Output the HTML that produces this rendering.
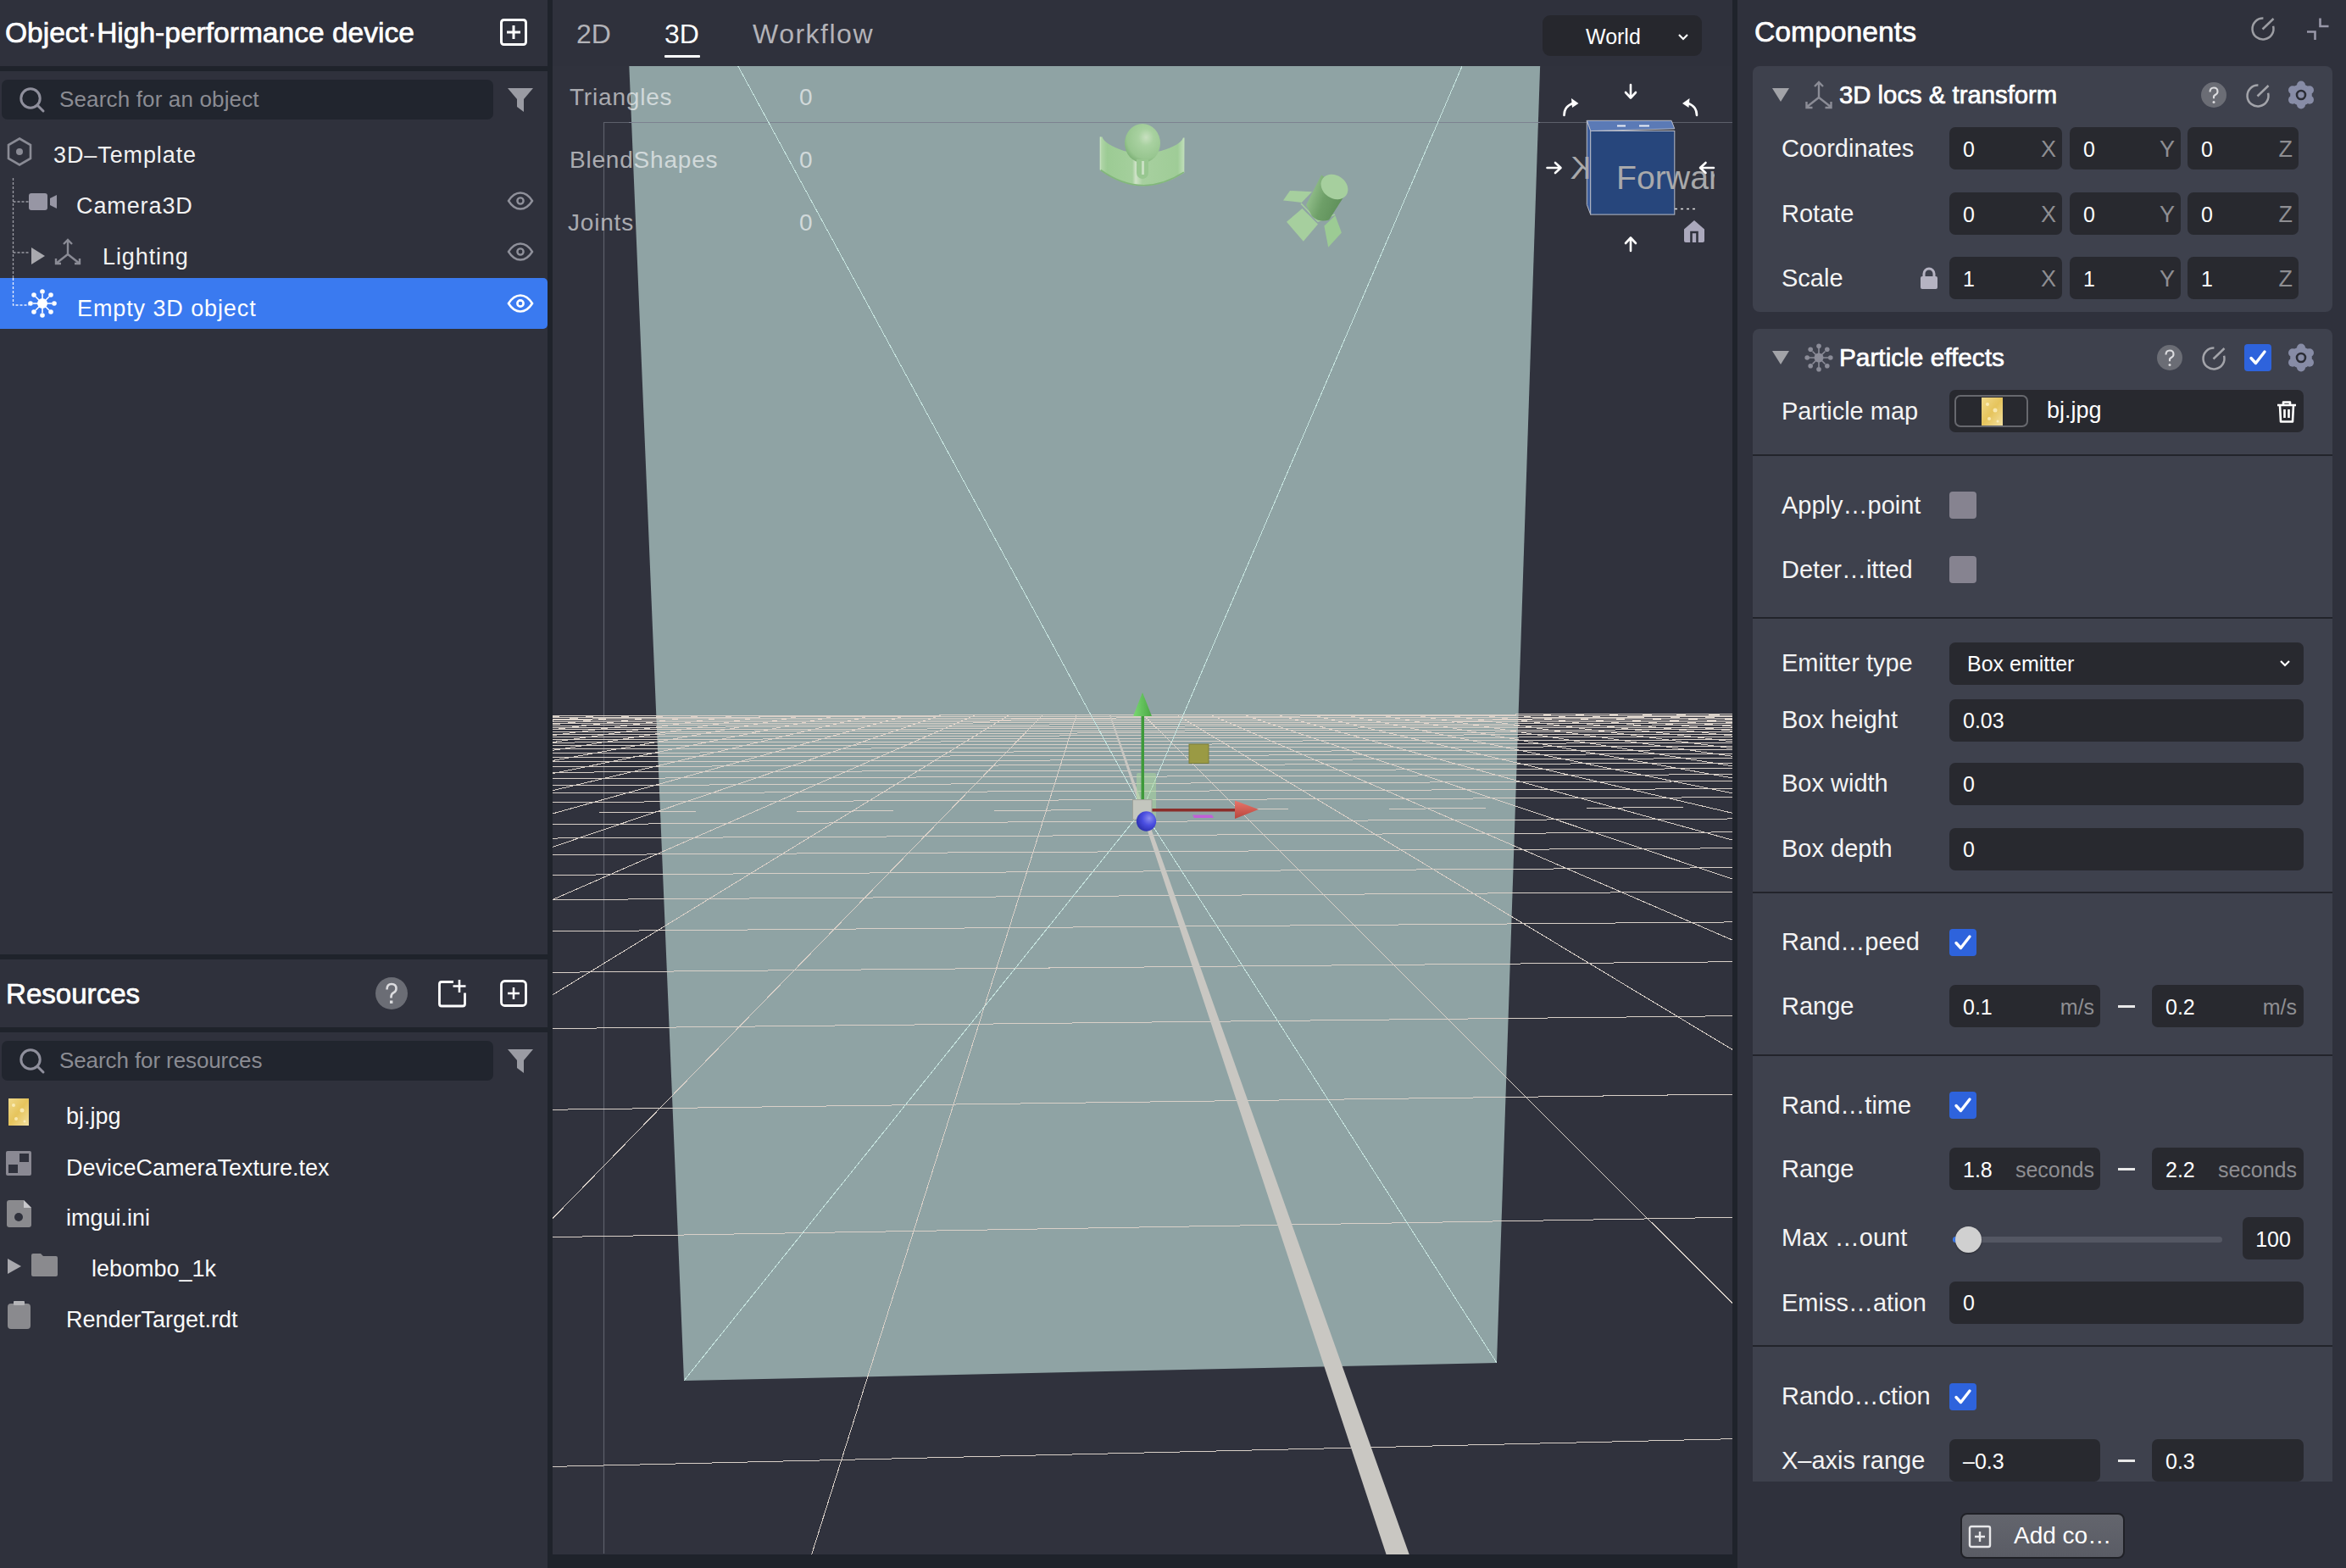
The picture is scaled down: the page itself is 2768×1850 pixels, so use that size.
<!DOCTYPE html>
<html><head><meta charset="utf-8">
<style>
*{margin:0;padding:0;box-sizing:border-box}
html,body{width:2768px;height:1850px;overflow:hidden;background:#2f313c;font-family:"Liberation Sans",sans-serif;color:#fff}
.a{position:absolute}
.t{position:absolute;white-space:nowrap;line-height:1}
.div{position:absolute;background:#1f232b}
.search{position:absolute;background:#21252e;border-radius:7px}
.ph{color:#8b8c93;font-size:26px;letter-spacing:0.6px}
.tree{font-size:27px;color:#f2f2f2;letter-spacing:0.9px}
.res{font-size:27px;color:#fafafa}
.h1{font-size:33px;font-weight:bold;color:#fff}
.tab{font-size:32px;color:#b3b3b8}
.stat{font-size:28px;color:rgba(255,255,255,0.6);letter-spacing:0.8px}
.card{position:absolute;left:2068px;width:684px;background:#3e414d;border-radius:8px}
.lbl{font-size:28px;color:#f4f4f4}
.inp{position:absolute;background:#28292f;border-radius:7px}
.val{font-size:25px;color:#fff}
.ax{font-size:26px;color:#8e8e92}
.unit{font-size:25px;color:#8e8e92}
.sep{position:absolute;left:2068px;width:684px;height:3px;background:#25272e}
.cb{position:absolute;width:32px;height:32px;border-radius:4px;background:#2e63dc}
.hb{font-weight:bold;color:#fff}
.sb{font-weight:normal;color:#fff;-webkit-text-stroke:0.7px #fff}
.cbg{position:absolute;width:32px;height:32px;border-radius:4px;background:#868390}
</style></head>
<body>
<!-- ============ LEFT PANEL ============ -->
<div class="t sb" style="left:6px;top:21.5px;font-size:33.56px">Object·High-performance device</div>
<svg class="a" style="left:588px;top:20px" width="36" height="36" viewBox="0 0 36 36"><rect x="3.5" y="3.5" width="29" height="29" rx="3" fill="none" stroke="#fff" stroke-width="3"/><path d="M18 10v16M10 18h16" stroke="#fff" stroke-width="3"/></svg>
<div class="div" style="left:0;top:78px;width:646px;height:6px"></div>
<div class="search" style="left:2px;top:94px;width:580px;height:47px"></div>
<svg class="a" style="left:22px;top:103px" width="32" height="32" viewBox="0 0 32 32"><circle cx="14" cy="13" r="11.2" fill="none" stroke="#8f8f9c" stroke-width="3"/><path d="M22.5 21.5l6.5 6.5" stroke="#8f8f9c" stroke-width="3" stroke-linecap="round"/></svg>
<div class="t ph" style="left:70px;top:104px;letter-spacing:0.15px">Search for an object</div>
<svg class="a" style="left:598px;top:103px" width="32" height="30" viewBox="0 0 32 30"><path d="M1 1h30l-11 13v15l-8-6v-9z" fill="#9a9ba3"/></svg>

<!-- tree -->
<svg class="a" style="left:6px;top:161px" width="34" height="36" viewBox="0 0 34 36"><path d="M17 2.5L30 10v16L17 33.5 4 26V10z" fill="none" stroke="#8a8b95" stroke-width="2.6"/><circle cx="17" cy="18" r="4" fill="#8a8b95"/></svg>
<div class="t tree" style="left:63px;top:170px">3D–Template</div>
<svg class="a" style="left:12px;top:208px" width="30" height="170" viewBox="0 0 30 170"><path d="M3.5 2V152M3.5 30H22M3.5 90H22M3.5 151H22" stroke="#9a9ba3" stroke-width="1.3" stroke-dasharray="3 2" fill="none"/></svg>
<svg class="a" style="left:34px;top:227px" width="34" height="22" viewBox="0 0 34 22"><rect x="0" y="1" width="22" height="20" rx="3" fill="#9796a4"/><path d="M25 7l8-4v16l-8-4z" fill="#9796a4"/></svg>
<div class="t tree" style="left:90px;top:230px">Camera3D</div>
<svg class="a" style="left:598px;top:226px" width="32" height="22" viewBox="0 0 32 22"><path d="M2 11C7 3 12 1.5 16 1.5S25 3 30 11C25 19 20 20.5 16 20.5S7 19 2 11z" fill="none" stroke="#8f909a" stroke-width="2.4"/><circle cx="16" cy="11" r="3.6" fill="none" stroke="#8f909a" stroke-width="2.4"/></svg>
<svg class="a" style="left:36px;top:291px" width="18" height="22" viewBox="0 0 18 22"><path d="M1 1l16 10L1 21z" fill="#a9a9ae"/></svg>
<svg class="a" style="left:63px;top:281px" width="34" height="34" viewBox="0 0 34 34"><path d="M17 2v17M17 19L3 30M17 19l14 11M12 7l5-5 5 5M3 24v6h6M25 30h6v-6" fill="none" stroke="#8a8b95" stroke-width="2.4"/></svg>
<div class="t tree" style="left:121px;top:290px">Lighting</div>
<svg class="a" style="left:598px;top:286px" width="32" height="22" viewBox="0 0 32 22"><path d="M2 11C7 3 12 1.5 16 1.5S25 3 30 11C25 19 20 20.5 16 20.5S7 19 2 11z" fill="none" stroke="#8f909a" stroke-width="2.4"/><circle cx="16" cy="11" r="3.6" fill="none" stroke="#8f909a" stroke-width="2.4"/></svg>
<div class="a" style="left:0;top:328px;width:646px;height:60px;background:#3a7af0;border-radius:0 5px 5px 0"></div>
<svg class="a" style="left:12px;top:208px" width="30" height="170" viewBox="0 0 30 170"><path d="M3.5 120V152H22" stroke="#e8eefc" stroke-width="1.3" stroke-dasharray="3 2" fill="none"/></svg>
<svg class="a" style="left:33px;top:341px" width="34" height="34" viewBox="0 0 34 34"><g fill="#fff"><circle cx="17" cy="17" r="6"/><circle cx="17" cy="3" r="2.8"/><circle cx="17" cy="31" r="2.8"/><circle cx="3" cy="17" r="2.8"/><circle cx="31" cy="17" r="2.8"/><circle cx="7" cy="7" r="2.8"/><circle cx="27" cy="7" r="2.8"/><circle cx="7" cy="27" r="2.8"/><circle cx="27" cy="27" r="2.8"/></g><path d="M17 6v22M6 17h22M9 9l16 16M25 9L9 25" stroke="#fff" stroke-width="1.6"/></svg>
<div class="t tree" style="left:91px;top:351px;color:#fff">Empty 3D object</div>
<svg class="a" style="left:598px;top:347px" width="32" height="22" viewBox="0 0 32 22"><path d="M2 11C7 3 12 1.5 16 1.5S25 3 30 11C25 19 20 20.5 16 20.5S7 19 2 11z" fill="none" stroke="#fff" stroke-width="2.6"/><circle cx="16" cy="11" r="3.6" fill="none" stroke="#fff" stroke-width="2.6"/></svg>

<!-- resources -->
<div class="div" style="left:0;top:1126px;width:646px;height:6px"></div>
<div class="t sb" style="left:7px;top:1156px;font-size:33.1px">Resources</div>
<svg class="a" style="left:442px;top:1152px" width="40" height="40" viewBox="0 0 40 40"><circle cx="20" cy="20" r="19" fill="#6b6d75"/><path d="M14.5 15.5q0-6.5 5.5-6.5t5.5 5.5q0 3-3 4.6T19.5 24v1.6" fill="none" stroke="#dcdcdf" stroke-width="2.6"/><rect x="18" y="28.5" width="3.4" height="3.4" fill="#dcdcdf"/></svg>
<svg class="a" style="left:515px;top:1155px" width="38" height="36" viewBox="0 0 38 36"><path d="M20 3.5H6Q3.5 3.5 3.5 6v23.5Q3.5 32 6 32h25q2.5 0 2.5-2.5V16.5" fill="none" stroke="#fff" stroke-width="2.8"/><path d="M27 1v15M19.5 8.5h15" stroke="#fff" stroke-width="2.6"/></svg>
<svg class="a" style="left:588px;top:1154px" width="36" height="36" viewBox="0 0 36 36"><rect x="3.5" y="3.5" width="29" height="29" rx="4" fill="none" stroke="#fff" stroke-width="2.8"/><path d="M18 11v14M11 18h14" stroke="#fff" stroke-width="2.5"/></svg>
<div class="div" style="left:0;top:1212px;width:646px;height:6px"></div>
<div class="search" style="left:2px;top:1228px;width:580px;height:47px"></div>
<svg class="a" style="left:22px;top:1237px" width="32" height="32" viewBox="0 0 32 32"><circle cx="14" cy="13" r="11.2" fill="none" stroke="#8f8f9c" stroke-width="3"/><path d="M22.5 21.5l6.5 6.5" stroke="#8f8f9c" stroke-width="3" stroke-linecap="round"/></svg>
<div class="t ph" style="left:70px;top:1238px;letter-spacing:-0.1px">Search for resources</div>
<svg class="a" style="left:598px;top:1237px" width="32" height="30" viewBox="0 0 32 30"><path d="M1 1h30l-11 13v15l-8-6v-9z" fill="#9a9ba3"/></svg>

<svg class="a" style="left:10px;top:1296px" width="24" height="32" viewBox="0 0 24 32"><defs><linearGradient id="gy" x1="0" y1="0" x2="1" y2="1"><stop offset="0" stop-color="#f0d98a"/><stop offset="0.5" stop-color="#e6c45c"/><stop offset="1" stop-color="#f3e0a0"/></linearGradient></defs><rect width="24" height="32" fill="url(#gy)"/><g fill="#fff6d0" opacity="0.7"><circle cx="6" cy="8" r="2"/><circle cx="16" cy="14" r="2.5"/><circle cx="9" cy="24" r="2"/><circle cx="19" cy="27" r="1.5"/></g></svg>
<div class="t res" style="left:78px;top:1304px">bj.jpg</div>
<svg class="a" style="left:7px;top:1358px" width="30" height="29" viewBox="0 0 30 29"><rect x="0" y="0" width="30" height="29" rx="2" fill="#8a8993"/><rect x="16" y="3" width="11" height="10" fill="#2f313c"/><rect x="3" y="16" width="11" height="10" fill="#2f313c"/></svg>
<div class="t res" style="left:78px;top:1365px">DeviceCameraTexture.tex</div>
<svg class="a" style="left:8px;top:1416px" width="29" height="32" viewBox="0 0 29 32"><path d="M3 0h17l9 9v20q0 3-3 3H3q-3 0-3-3V3q0-3 3-3z" fill="#8a8a8e"/><path d="M20 0v9h9" fill="#c8c8cc"/><circle cx="14" cy="20" r="5" fill="#2f313c"/></svg>
<div class="t res" style="left:78px;top:1424px">imgui.ini</div>
<svg class="a" style="left:9px;top:1485px" width="16" height="18" viewBox="0 0 16 18"><path d="M0 0l16 9L0 18z" fill="#a9a9ae"/></svg>
<svg class="a" style="left:37px;top:1479px" width="31" height="27" viewBox="0 0 31 27"><path d="M0 2q0-2 2-2h9l3 3h15q2 0 2 2v20q0 2-2 2H2q-2 0-2-2z" fill="#8a8a8e"/></svg>
<div class="t res" style="left:108px;top:1484px">lebombo_1k</div>
<svg class="a" style="left:9px;top:1535px" width="27" height="33" viewBox="0 0 27 33"><rect x="0" y="3" width="27" height="30" rx="4" fill="#8a8a8e"/><rect x="7" y="0" width="13" height="5" rx="1" fill="#b5b5b8"/></svg>
<div class="t res" style="left:78px;top:1544px">RenderTarget.rdt</div>

<div class="div" style="left:646px;top:0;width:6px;height:1850px"></div>

<!-- ============ VIEWPORT ============ -->
<div class="a" style="left:652px;top:78px;width:1392px;height:1756px;overflow:hidden;background:#30323d">
<svg class="a" style="left:-652px;top:-78px" width="2768" height="1850" viewBox="0 0 2768 1850">
<path d="M713 144.5H2044M712.5 144V1833" stroke="#5d606b" stroke-width="1.2" fill="none"/>
<path d="M742 70L1817.4 70L1766 1608L807 1629Z" fill="#8fa3a4"/>
<path d="M742 144.5H1817" stroke="#7c8290" stroke-width="1.2" fill="none"/>
<path d="M640.0 847.0L663.3 844.7M640.0 851.4L704.3 844.6M640.0 856.4L745.2 844.6M640.0 862.3L786.1 844.5M640.0 869.2L826.8 844.5M640.0 877.4L867.5 844.4M640.0 1730.7L2060.0 1697.3M640.0 887.3L908.1 844.3M640.0 1459.8L2060.0 1436.0M640.0 899.6L948.6 844.3M640.0 1309.4L2060.0 1290.8M640.0 915.1L989.1 844.2M640.0 1213.7L2060.0 1198.5M640.0 935.5L1029.4 844.1M640.0 1147.4L2060.0 1134.6M640.0 963.3L1069.7 844.1M640.0 1098.9L2060.0 1087.8M640.0 1003.4L1109.9 844.0M640.0 1061.7L2060.0 1051.9M640.0 1066.7L1150.0 844.0M640.0 1032.4L2060.0 1023.6M640.0 1181.1L1190.1 843.9M640.0 1008.7L2060.0 1000.7M640.0 1450.0L1230.0 843.8M640.0 989.1L2060.0 981.8M952.6 1850.0L1269.9 843.8M640.0 972.6L2060.0 965.9M2060.0 1553.6L1349.4 843.7M640.0 946.5L2060.0 940.7M2060.0 1248.0L1389.0 843.6M640.0 936.0L2060.0 930.6M2060.0 1116.0L1428.6 843.5M640.0 926.7L2060.0 921.7M2060.0 1042.4L1468.1 843.5M640.0 918.5L2060.0 913.7M2060.0 995.5L1507.5 843.4M640.0 911.2L2060.0 906.7M2060.0 963.0L1546.8 843.4M640.0 904.6L2060.0 900.4M2060.0 939.1L1586.0 843.3M640.0 898.7L2060.0 894.7M2060.0 920.8L1625.2 843.2M640.0 893.3L2060.0 889.5M2060.0 906.3L1664.3 843.2M640.0 888.5L2060.0 884.7M2060.0 894.6L1703.3 843.1M640.0 884.0L2060.0 880.4M2060.0 885.0L1742.2 843.1M640.0 879.9L2060.0 876.5M2060.0 876.9L1781.1 843.0M640.0 876.1L2060.0 872.8M2060.0 869.9L1819.8 842.9M640.0 872.6L2060.0 869.4M2060.0 864.0L1858.5 842.9M640.0 869.3L2060.0 866.3M2060.0 858.8L1897.2 842.8M640.0 866.3L2060.0 863.4M2060.0 854.2L1935.7 842.8M640.0 863.5L2060.0 860.7M2060.0 850.2L1974.2 842.7M640.0 860.9L2060.0 858.1M2060.0 846.5L2012.6 842.7M640.0 858.4L2060.0 855.8M2060.0 843.3L2050.9 842.6M640.0 856.1L2060.0 853.5M640.0 853.9L2060.0 851.4M640.0 851.9L2060.0 849.5M640.0 849.9L2060.0 847.6M640.0 848.1L2060.0 845.8M640.0 846.4L2060.0 844.2M640.0 844.7L2060.0 842.6M7.7 961.3L122.2 960.8M240.7 960.3L355.2 959.8M473.7 959.3L588.2 958.8M706.7 958.3L821.2 957.8M939.7 957.3L1054.2 956.8M1172.7 956.3L1287.2 955.8M1405.7 955.2L1520.2 954.8M1638.7 954.2L1753.2 953.7M1871.7 953.2L1986.2 952.7" stroke="#d9d0c8" stroke-width="1.0" fill="none" shape-rendering="crispEdges"/>
<path d="M1308.9 843.7L3830.7 8488.0L4029.4 8488.0L1310.5 843.7Z" fill="#c9c7c2"/>
<path d="M1348 955.5L861 60M1348 955.5L1732.8 60M1348 955.5L807 1629M1348 955.5L1766 1608" stroke="#c6e4df" stroke-width="1" fill="none" shape-rendering="crispEdges"/>
<defs>
<linearGradient id="band" x1="0" y1="0" x2="1" y2="0"><stop offset="0" stop-color="#b2d6aa"/><stop offset="0.08" stop-color="#9ccb94"/><stop offset="0.38" stop-color="#a4cf9c"/><stop offset="0.42" stop-color="#cfe2c8"/><stop offset="0.5" stop-color="#a7d09f"/><stop offset="0.92" stop-color="#9fcc97"/><stop offset="1" stop-color="#c2e0bb"/></linearGradient>
<radialGradient id="sph" cx="0.6" cy="0.35" r="0.72"><stop offset="0" stop-color="#c8e0c0"/><stop offset="0.3" stop-color="#a8d1a0"/><stop offset="0.75" stop-color="#98c690"/><stop offset="1" stop-color="#76ab6f"/></radialGradient>
<linearGradient id="cyl" x1="0" y1="0" x2="1" y2="0.4"><stop offset="0" stop-color="#a8d2a0"/><stop offset="0.55" stop-color="#6e9f68"/><stop offset="1" stop-color="#5d8e58"/></linearGradient>
<radialGradient id="blueS" cx="0.65" cy="0.35" r="0.7"><stop offset="0" stop-color="#8a8cf0"/><stop offset="0.5" stop-color="#4a4ee0"/><stop offset="1" stop-color="#2c30b0"/></radialGradient>
<linearGradient id="redC" x1="0" y1="0" x2="0" y2="1"><stop offset="0" stop-color="#e8766c"/><stop offset="1" stop-color="#b8453c"/></linearGradient>
<linearGradient id="grnC" x1="0" y1="0" x2="1" y2="0"><stop offset="0" stop-color="#7ad872"/><stop offset="1" stop-color="#4aa844"/></linearGradient>
</defs>
<!-- lamp -->
<path d="M1298.4 161.5L1300.5 161.5Q1303 170 1326 178Q1348 184 1370 178Q1393 171 1396 162.5L1397.5 162.5L1397.3 203.7Q1347 236 1298.4 201Z" fill="url(#band)"/>
<path d="M1298.6 200.5Q1347 235.5 1396.8 203.2" fill="none" stroke="#82b77b" stroke-width="1.6"/>
<path d="M1298.4 161.5V200.5" stroke="#c4e2bd" stroke-width="1.5"/>
<ellipse cx="1348" cy="169" rx="21" ry="23" fill="url(#sph)"/>
<rect x="1341" y="188" width="14" height="23" rx="7" fill="#98c790"/>
<rect x="1341" y="188" width="14" height="6" fill="#98c790"/>
<rect x="1347" y="190" width="3" height="16" fill="#c8e0c2"/>
<!-- spotlight -->
<path d="M1514 236.4L1522 225L1548 226.2L1535.8 239Z" fill="#a6cf9e"/>
<path d="M1518 261.7L1536.5 246L1555 264.4L1537.8 284.8Z" fill="#a6cf9e"/>
<path d="M1562.4 266.4L1575.4 254.2L1582.9 274.6L1567.2 291.7Z" fill="#9ccb94"/>
<path d="M1535 240L1555 261L1575 253" fill="none" stroke="#a6cf9e" stroke-width="1.6"/>
<path d="M1559 206.4L1589.7 225.5L1568 259.6Q1556 263 1548 255L1541 242Z" fill="url(#cyl)"/>
<ellipse cx="1574.5" cy="220.5" rx="17" ry="13.5" transform="rotate(35 1574.5 220.5)" fill="#a6cf9e"/>
<!-- gizmo -->
<rect x="1341" y="912" width="23" height="62" rx="2" fill="#a9d79f" opacity="0.55"/>
<rect x="1403" y="878" width="23" height="22.5" fill="#9a9a44" stroke="#80803a" stroke-width="1"/>
<path d="M1407 961.6L1430 961.6L1432 965L1409 965Z" fill="#c060d8"/>
<rect x="1346.5" y="845" width="3.5" height="100" fill="#3e9a3a"/>
<path d="M1348 817L1359 845L1337 845Z" fill="url(#grnC)"/>
<rect x="1359" y="954" width="100" height="3.5" fill="#8a2e2a"/>
<path d="M1485 955L1457 944.4L1457 966Z" fill="url(#redC)"/>
<rect x="1336.5" y="943.6" width="22.5" height="23.4" fill="#c3c6be" stroke="#9ea29a" stroke-width="1"/>
<circle cx="1352.5" cy="969" r="11.7" fill="url(#blueS)"/>
<!-- nav cube -->
<path d="M1872.3 142.3L1972.1 142.3L1975.8 151.9L1876.7 154.5Z" fill="#5b7ab6" stroke="#b8bcc8" stroke-width="1"/>
<path d="M1872.3 142.3L1876.7 154.5L1876.7 253.1L1872.3 241.4Z" fill="#3d5d9c" stroke="#b8bcc8" stroke-width="1"/>
<rect x="1876.7" y="154.5" width="99.1" height="98.6" fill="#27467c" stroke="#b8bcc8" stroke-width="1"/>
<path d="M1908 148.5h10M1934 148.5h12" stroke="#e8ecf4" stroke-width="2"/>
<text x="-1877" y="211" transform="scale(-1,1)" font-family="Liberation Sans" font-size="36" fill="#a9a9ab">K</text>
<text x="1907" y="223" font-family="Liberation Sans" font-size="39" fill="#a9a9ab" textLength="122" lengthAdjust="spacingAndGlyphs">Forwar</text>
<rect x="2023" y="180" width="20" height="50" fill="#30323d"/>
<path d="M1976 246.5h26" stroke="#e0e0e0" stroke-width="1.3" stroke-dasharray="3 4"/>
<g fill="none" stroke="#fff" stroke-width="2.6" stroke-linecap="round" stroke-linejoin="round">
<path d="M1924 100V115M1918 109L1924 115.5L1930 109"/>
<path d="M1924 296V281M1918 287L1924 280.5L1930 287"/>
<path d="M1825.5 198H1841M1835 192L1841.5 198L1835 204"/>
<path d="M2022 198H2006.5M2012.5 192L2006 198L2012.5 204"/>
<path d="M1845.5 136Q1845.5 125 1857 121.5"/>
<path d="M2002 136Q2002 125 1990.5 121.5"/>
</g>
<path d="M1862.5 122L1854 116L1855 127Z" fill="#fff"/>
<path d="M1985 122L1993.5 116L1992.5 127Z" fill="#fff"/>
<path d="M1999 260L2011 270.5V284Q2011 286 2009 286H1989Q1987 286 1987 284V270.5Z" fill="#aba9bd"/>
<path d="M1995.5 286V274H2002.5V286" fill="none" stroke="#30323d" stroke-width="2.6"/>

</svg>
</div>
<div class="div" style="left:652px;top:1834px;width:1392px;height:16px"></div>

<div class="t tab" style="left:680px;top:24px">2D</div>
<div class="t tab" style="left:784px;top:24px;color:#fff">3D</div>
<div class="a" style="left:784px;top:65px;width:42px;height:3px;background:#fff;border-radius:1px"></div>
<div class="t tab" style="left:888px;top:24px;letter-spacing:1.5px">Workflow</div>
<div class="a" style="left:1820px;top:18px;width:188px;height:48px;background:#26272d;border-radius:9px"></div>
<div class="t" style="left:1871px;top:31px;font-size:25px;color:#fff">World</div>
<svg class="a" style="left:1978px;top:38px" width="16" height="12" viewBox="0 0 16 12"><path d="M3 3l5 5 5-5" fill="none" stroke="#fff" stroke-width="2.2"/></svg>

<div class="t stat" style="left:672px;top:101px">Triangles</div>
<div class="t stat" style="left:943px;top:101px">0</div>
<div class="t stat" style="left:672px;top:175px">BlendShapes</div>
<div class="t stat" style="left:943px;top:175px">0</div>
<div class="t stat" style="left:670px;top:249px">Joints</div>
<div class="t stat" style="left:943px;top:249px">0</div>

<div class="div" style="left:2044px;top:0;width:6px;height:1850px"></div>

<!-- ============ RIGHT PANEL ============ -->
<div class="t sb" style="left:2070px;top:20.9px;font-size:33.7px">Components</div>
<svg class="a" style="left:2654px;top:18px" width="32" height="32" viewBox="0 0 32 32"><path d="M28.1 12.8A12.5 12.5 0 1 1 16.4 3.5" fill="none" stroke="#9c9da3" stroke-width="2.5"/><path d="M15.5 16.5L28.5 4" stroke="#9c9da3" stroke-width="2.5" stroke-linecap="butt"/></svg>
<svg class="a" style="left:2719px;top:19px" width="32" height="30" viewBox="0 0 32 30"><path d="M18.5 2.5v9.5h10M3 18.5h9.5v9.5" fill="none" stroke="#9897a8" stroke-width="2.6"/></svg>
<div class="a" style="left:2068px;top:78px;width:684px;height:290px;background:#3e414d;border-radius:8px"></div>
<svg class="a" style="left:2091px;top:104px" width="20" height="16" viewBox="0 0 20 16"><path d="M0 0h20L10 16z" fill="#a2a3a8"/></svg>
<svg class="a" style="left:2128px;top:95px" width="36" height="35" viewBox="0 0 36 35"><path d="M18 2v18M18 20L4 31M18 20l14 11M13 7l5-5 5 5M3.5 25v7h7M25.5 32h7v-7" fill="none" stroke="#8b8c96" stroke-width="2.4"/></svg>
<div class="t sb" style="left:2170.0px;top:97.1px;font-size:29.3px;">3D locs &amp; transform</div>
<svg class="a" style="left:2596px;top:96px" width="32" height="32" viewBox="0 0 32 32"><circle cx="16" cy="16" r="15" fill="#6b6d75"/><path d="M11.5 12.5q0-5 4.5-5t4.5 4.5q0 2.5-2.5 3.8T16 19v1.2" fill="none" stroke="#dcdcdf" stroke-width="2.1" stroke-linecap="butt"/><circle cx="16" cy="24.5" r="1.5" fill="#dcdcdf"/></svg>
<svg class="a" style="left:2648px;top:97px" width="32" height="32" viewBox="0 0 32 32"><path d="M28.1 12.8A12.5 12.5 0 1 1 16.4 3.5" fill="none" stroke="#a3a4aa" stroke-width="2.5"/><path d="M15.5 16.5L28.5 4" stroke="#a3a4aa" stroke-width="2.5" stroke-linecap="butt"/></svg>
<svg class="a" style="left:2698px;top:95px" width="34" height="34" viewBox="0 0 34 34"><g fill="#878ca6"><circle cx="17" cy="17" r="12.8"/><circle cx="17" cy="5.5" r="5"/><circle cx="17" cy="28.5" r="5"/><circle cx="27" cy="11.25" r="5"/><circle cx="7" cy="11.25" r="5"/><circle cx="27" cy="22.75" r="5"/><circle cx="7" cy="22.75" r="5"/></g><circle cx="17" cy="17" r="5" fill="none" stroke="#2b2d36" stroke-width="2.6"/></svg>
<div class="t lbl" style="left:2102.0px;top:161.3px;font-size:29px;">Coordinates</div>
<div class="a" style="left:2300px;top:150px;width:133px;height:50px;background:#28292f;border-radius:7px"></div>
<div class="t val" style="left:2316.0px;top:163.8px;font-size:25px;">0</div>
<div class="t ax" style="right:342.0px;top:163.1px;font-size:27px;">X</div>
<div class="a" style="left:2442px;top:150px;width:131px;height:50px;background:#28292f;border-radius:7px"></div>
<div class="t val" style="left:2458.0px;top:163.8px;font-size:25px;">0</div>
<div class="t ax" style="right:202.0px;top:163.1px;font-size:27px;">Y</div>
<div class="a" style="left:2581px;top:150px;width:131px;height:50px;background:#28292f;border-radius:7px"></div>
<div class="t val" style="left:2597.0px;top:163.8px;font-size:25px;">0</div>
<div class="t ax" style="right:63.0px;top:163.1px;font-size:27px;">Z</div>
<div class="t lbl" style="left:2102.0px;top:238.3px;font-size:29px;">Rotate</div>
<div class="a" style="left:2300px;top:227px;width:133px;height:50px;background:#28292f;border-radius:7px"></div>
<div class="t val" style="left:2316.0px;top:240.8px;font-size:25px;">0</div>
<div class="t ax" style="right:342.0px;top:240.1px;font-size:27px;">X</div>
<div class="a" style="left:2442px;top:227px;width:131px;height:50px;background:#28292f;border-radius:7px"></div>
<div class="t val" style="left:2458.0px;top:240.8px;font-size:25px;">0</div>
<div class="t ax" style="right:202.0px;top:240.1px;font-size:27px;">Y</div>
<div class="a" style="left:2581px;top:227px;width:131px;height:50px;background:#28292f;border-radius:7px"></div>
<div class="t val" style="left:2597.0px;top:240.8px;font-size:25px;">0</div>
<div class="t ax" style="right:63.0px;top:240.1px;font-size:27px;">Z</div>
<div class="t lbl" style="left:2102.0px;top:314.4px;font-size:29px;">Scale</div>
<div class="a" style="left:2300px;top:303px;width:133px;height:50px;background:#28292f;border-radius:7px"></div>
<div class="t val" style="left:2316.0px;top:316.8px;font-size:25px;">1</div>
<div class="t ax" style="right:342.0px;top:316.1px;font-size:27px;">X</div>
<div class="a" style="left:2442px;top:303px;width:131px;height:50px;background:#28292f;border-radius:7px"></div>
<div class="t val" style="left:2458.0px;top:316.8px;font-size:25px;">1</div>
<div class="t ax" style="right:202.0px;top:316.1px;font-size:27px;">Y</div>
<div class="a" style="left:2581px;top:303px;width:131px;height:50px;background:#28292f;border-radius:7px"></div>
<div class="t val" style="left:2597.0px;top:316.8px;font-size:25px;">1</div>
<div class="t ax" style="right:63.0px;top:316.1px;font-size:27px;">Z</div>
<svg class="a" style="left:2265px;top:315px" width="22" height="27" viewBox="0 0 22 27"><path d="M5 12V8a6 6 0 0 1 12 0v4" fill="none" stroke="#b5b3c2" stroke-width="3"/><rect x="1" y="11" width="20" height="15" rx="2" fill="#b5b3c2"/></svg>
<div class="a" style="left:2068px;top:388px;width:684px;height:1360px;background:#3e414d;border-radius:8px 8px 0 0"></div>
<svg class="a" style="left:2091px;top:414px" width="20" height="16" viewBox="0 0 20 16"><path d="M0 0h20L10 16z" fill="#a2a3a8"/></svg>
<svg class="a" style="left:2129px;top:405px" width="34" height="34" viewBox="0 0 34 34"><g fill="#8b8c98"><circle cx="17" cy="17" r="5.5"/><circle cx="17" cy="3.2" r="2.8"/><circle cx="17" cy="30.8" r="2.8"/><circle cx="3.2" cy="17" r="2.8"/><circle cx="30.8" cy="17" r="2.8"/><circle cx="7.2" cy="7.2" r="2.8"/><circle cx="26.8" cy="7.2" r="2.8"/><circle cx="7.2" cy="26.8" r="2.8"/><circle cx="26.8" cy="26.8" r="2.8"/></g><path d="M17 6v22M6 17h22M9.5 9.5l15 15M24.5 9.5l-15 15" stroke="#8b8c98" stroke-width="1.6"/></svg>
<div class="t sb" style="left:2170.0px;top:406.7px;font-size:29.8px;">Particle effects</div>
<svg class="a" style="left:2544px;top:406px" width="32" height="32" viewBox="0 0 32 32"><circle cx="16" cy="16" r="15" fill="#6b6d75"/><path d="M11.5 12.5q0-5 4.5-5t4.5 4.5q0 2.5-2.5 3.8T16 19v1.2" fill="none" stroke="#dcdcdf" stroke-width="2.1" stroke-linecap="butt"/><circle cx="16" cy="24.5" r="1.5" fill="#dcdcdf"/></svg>
<svg class="a" style="left:2596px;top:407px" width="32" height="32" viewBox="0 0 32 32"><path d="M28.1 12.8A12.5 12.5 0 1 1 16.4 3.5" fill="none" stroke="#a3a4aa" stroke-width="2.5"/><path d="M15.5 16.5L28.5 4" stroke="#a3a4aa" stroke-width="2.5" stroke-linecap="butt"/></svg>
<div class="cb" style="left:2648px;top:406px"><svg width="32" height="32" viewBox="0 0 32 32"><path d="M8 16.5l5.5 6L24 9" fill="none" stroke="#fff" stroke-width="3.4" stroke-linecap="round" stroke-linejoin="round"/></svg></div>
<svg class="a" style="left:2698px;top:405px" width="34" height="34" viewBox="0 0 34 34"><g fill="#878ca6"><circle cx="17" cy="17" r="12.8"/><circle cx="17" cy="5.5" r="5"/><circle cx="17" cy="28.5" r="5"/><circle cx="27" cy="11.25" r="5"/><circle cx="7" cy="11.25" r="5"/><circle cx="27" cy="22.75" r="5"/><circle cx="7" cy="22.75" r="5"/></g><circle cx="17" cy="17" r="5" fill="none" stroke="#2b2d36" stroke-width="2.6"/></svg>
<div class="t lbl" style="left:2102.0px;top:471.4px;font-size:29px;">Particle map</div>
<div class="a" style="left:2300px;top:460px;width:418px;height:50px;background:#28292f;border-radius:7px"></div>
<div class="a" style="left:2306px;top:466px;width:87px;height:38px;border:2px solid #67686e;border-radius:7px"></div>
<svg class="a" style="left:2338px;top:469px" width="25" height="33" viewBox="0 0 25 33"><rect width="25" height="33" fill="url(#gy)"/><g fill="#fff6d0" opacity="0.7"><circle cx="7" cy="8" r="2"/><circle cx="16" cy="15" r="2.5"/><circle cx="9" cy="25" r="2"/><circle cx="19" cy="28" r="1.5"/></g></svg>
<div class="t val" style="left:2415.0px;top:471.1px;font-size:27px;">bj.jpg</div>
<svg class="a" style="left:2685px;top:472px" width="26" height="28" viewBox="0 0 26 28"><path d="M2 6h22M9 6V2.5h8V6M5 6l1 19.5h14L21 6M10.5 11v10M15.5 11v10" fill="none" stroke="#fff" stroke-width="2.6" stroke-linejoin="round"/></svg>
<div class="a" style="left:2068px;top:536px;width:684px;height:2px;background:#22242b"></div>
<div class="t lbl" style="left:2102.0px;top:582.4px;font-size:29px;">Apply…point</div>
<div class="cbg" style="left:2300px;top:580px"></div>
<div class="t lbl" style="left:2102.0px;top:658.4px;font-size:29px;">Deter…itted</div>
<div class="cbg" style="left:2300px;top:656px"></div>
<div class="a" style="left:2068px;top:728px;width:684px;height:2px;background:#22242b"></div>
<div class="t lbl" style="left:2102.0px;top:768.4px;font-size:29px;">Emitter type</div>
<div class="a" style="left:2300px;top:758px;width:418px;height:50px;background:#28292f;border-radius:7px"></div>
<div class="t val" style="left:2321.0px;top:770.8px;font-size:25px;">Box emitter</div>
<svg class="a" style="left:2688px;top:777px" width="16" height="12" viewBox="0 0 16 12"><path d="M3 3l5 5 5-5" fill="none" stroke="#fff" stroke-width="2.2"/></svg>
<div class="t lbl" style="left:2102.0px;top:835.4px;font-size:29px;">Box height</div>
<div class="a" style="left:2300px;top:825px;width:418px;height:50px;background:#28292f;border-radius:7px"></div>
<div class="t val" style="left:2316.0px;top:837.8px;font-size:25px;">0.03</div>
<div class="t lbl" style="left:2102.0px;top:910.4px;font-size:29px;">Box width</div>
<div class="a" style="left:2300px;top:900px;width:418px;height:50px;background:#28292f;border-radius:7px"></div>
<div class="t val" style="left:2316.0px;top:912.8px;font-size:25px;">0</div>
<div class="t lbl" style="left:2102.0px;top:987.4px;font-size:29px;">Box depth</div>
<div class="a" style="left:2300px;top:977px;width:418px;height:50px;background:#28292f;border-radius:7px"></div>
<div class="t val" style="left:2316.0px;top:989.8px;font-size:25px;">0</div>
<div class="a" style="left:2068px;top:1052px;width:684px;height:2px;background:#22242b"></div>
<div class="t lbl" style="left:2102.0px;top:1097.3px;font-size:29px;">Rand…peed</div>
<div class="cb" style="left:2300px;top:1096px"><svg width="32" height="32" viewBox="0 0 32 32"><path d="M8 16.5l5.5 6L24 9" fill="none" stroke="#fff" stroke-width="3.4" stroke-linecap="round" stroke-linejoin="round"/></svg></div>
<div class="t lbl" style="left:2102.0px;top:1173.3px;font-size:29px;">Range</div>
<div class="a" style="left:2300px;top:1162px;width:178px;height:50px;background:#28292f;border-radius:7px"></div>
<div class="a" style="left:2539px;top:1162px;width:179px;height:50px;background:#28292f;border-radius:7px"></div>
<div class="a" style="left:2499px;top:1186px;width:20px;height:3px;background:#e8e8e8"></div>
<div class="t val" style="left:2316.0px;top:1175.8px;font-size:25px;">0.1</div>
<div class="t val" style="left:2555.0px;top:1175.8px;font-size:25px;">0.2</div>
<div class="t unit" style="right:297.0px;top:1175.8px;font-size:25px;">m/s</div>
<div class="t unit" style="right:58.0px;top:1175.8px;font-size:25px;">m/s</div>
<div class="a" style="left:2068px;top:1244px;width:684px;height:2px;background:#22242b"></div>
<div class="t lbl" style="left:2102.0px;top:1290.3px;font-size:29px;">Rand…time</div>
<div class="cb" style="left:2300px;top:1288px"><svg width="32" height="32" viewBox="0 0 32 32"><path d="M8 16.5l5.5 6L24 9" fill="none" stroke="#fff" stroke-width="3.4" stroke-linecap="round" stroke-linejoin="round"/></svg></div>
<div class="t lbl" style="left:2102.0px;top:1365.3px;font-size:29px;">Range</div>
<div class="a" style="left:2300px;top:1354px;width:178px;height:50px;background:#28292f;border-radius:7px"></div>
<div class="a" style="left:2539px;top:1354px;width:179px;height:50px;background:#28292f;border-radius:7px"></div>
<div class="a" style="left:2499px;top:1378px;width:20px;height:3px;background:#e8e8e8"></div>
<div class="t val" style="left:2316.0px;top:1367.8px;font-size:25px;">1.8</div>
<div class="t val" style="left:2555.0px;top:1367.8px;font-size:25px;">2.2</div>
<div class="t unit" style="right:297.0px;top:1367.8px;font-size:25px;">seconds</div>
<div class="t unit" style="right:58.0px;top:1367.8px;font-size:25px;">seconds</div>
<div class="t lbl" style="left:2102.0px;top:1446.3px;font-size:29px;">Max …ount</div>
<div class="a" style="left:2304px;top:1459px;width:318px;height:7px;background:#545763;border-radius:4px"></div>
<div class="a" style="left:2304px;top:1459px;width:8px;height:7px;background:#3a7af0;border-radius:4px 0 0 4px"></div>
<div class="a" style="left:2307px;top:1447px;width:31px;height:31px;border-radius:50%;background:#d0d0d0;box-shadow:0 1px 2px rgba(0,0,0,.35)"></div>
<div class="a" style="left:2646px;top:1436px;width:72px;height:50px;background:#28292f;border-radius:7px"></div>
<div class="t val" style="left:2682.0px;top:1449.8px;font-size:25px;transform:translateX(-50%)">100</div>
<div class="t lbl" style="left:2102.0px;top:1523.3px;font-size:29px;">Emiss…ation</div>
<div class="a" style="left:2300px;top:1512px;width:418px;height:50px;background:#28292f;border-radius:7px"></div>
<div class="t val" style="left:2316.0px;top:1524.8px;font-size:25px;">0</div>
<div class="a" style="left:2068px;top:1587px;width:684px;height:2px;background:#22242b"></div>
<div class="t lbl" style="left:2102.0px;top:1633.3px;font-size:29px;">Rando…ction</div>
<div class="cb" style="left:2300px;top:1632px"><svg width="32" height="32" viewBox="0 0 32 32"><path d="M8 16.5l5.5 6L24 9" fill="none" stroke="#fff" stroke-width="3.4" stroke-linecap="round" stroke-linejoin="round"/></svg></div>
<div class="t lbl" style="left:2102.0px;top:1709.3px;font-size:29px;">X–axis range</div>
<div class="a" style="left:2300px;top:1698px;width:178px;height:50px;background:#28292f;border-radius:7px"></div>
<div class="a" style="left:2539px;top:1698px;width:179px;height:50px;background:#28292f;border-radius:7px"></div>
<div class="a" style="left:2499px;top:1722px;width:20px;height:3px;background:#e8e8e8"></div>
<div class="t val" style="left:2316.0px;top:1711.8px;font-size:25px;">–0.3</div>
<div class="t val" style="left:2555.0px;top:1711.8px;font-size:25px;">0.3</div>
<div class="a" style="left:2313px;top:1785px;width:194px;height:54px;background:linear-gradient(#63656d,#5a5c65);border-radius:8px;border:2px solid #202127"></div>
<svg class="a" style="left:2322px;top:1799px" width="28" height="28" viewBox="0 0 28 28"><rect x="2" y="2" width="24" height="24" rx="2" fill="none" stroke="#e8e8ea" stroke-width="2.4"/><path d="M14 8v12M8 14h12" stroke="#e8e8ea" stroke-width="2.4"/></svg>
<div class="t val" style="left:2376.0px;top:1798.2px;font-size:28px;">Add co…</div>
</body></html>
